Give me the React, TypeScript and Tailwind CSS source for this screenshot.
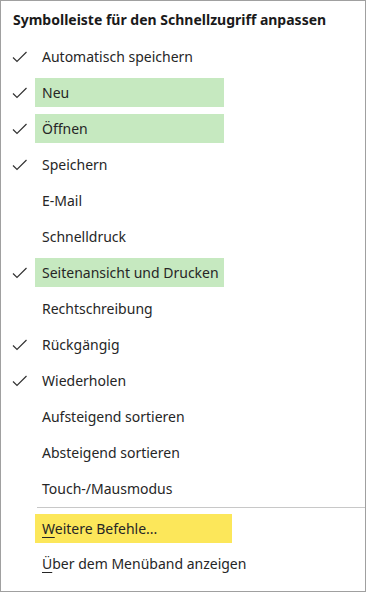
import React from "react";

const items: { label: string; checked: boolean; hl?: boolean }[] = [
  { label: "Automatisch speichern", checked: true },
  { label: "Neu", checked: true, hl: true },
  { label: "Öffnen", checked: true, hl: true },
  { label: "Speichern", checked: true },
  { label: "E-Mail", checked: false },
  { label: "Schnelldruck", checked: false },
  { label: "Seitenansicht und Drucken", checked: true, hl: true },
  { label: "Rechtschreibung", checked: false },
  { label: "Rückgängig", checked: true },
  { label: "Wiederholen", checked: true },
  { label: "Aufsteigend sortieren", checked: false },
  { label: "Absteigend sortieren", checked: false },
  { label: "Touch-/Mausmodus", checked: false },
];

function Check() {
  return (
    <svg width="16" height="12" viewBox="0 0 16 12" fill="none">
      <path d="M1 6.5 L5 10.5 L14.5 1" stroke="#333" strokeWidth="1.2" />
    </svg>
  );
}

export default function App() {
  return (
    <div className="w-[367px] h-[592px] bg-white">
      <div
        className="w-[366px] h-[592px] border border-[#a0a0a0] bg-white text-[#262626]"
        style={{ fontFamily: '"Noto Sans", sans-serif' }}
      >
        <div className="h-[41px] pl-[12px] pt-[8px] text-[14px] font-bold text-[#1a1a1a]">
          Symbolleiste für den Schnellzugriff anpassen
        </div>
        <div className="flex flex-col gap-[7px]">
          {items.map((it) => (
            <div key={it.label} className="flex items-center h-[29px]">
              <div className="w-[34px] flex justify-center pl-[3px]">
                {it.checked && <Check />}
              </div>
              <div
                className={`h-[29px] w-[189px] flex items-center pl-[7px] text-[14px] ${
                  it.hl ? "bg-[#c6e9c0]" : ""
                }`}
              >
                {it.label}
              </div>
            </div>
          ))}
        </div>
        <div className="ml-[36px] mt-[4px] h-px bg-[#c8c8c8]" />
        <div className="mt-[6px] flex flex-col gap-[6px]">
          <div className="flex items-center h-[29px]">
            <div className="w-[34px]" />
            <div className="h-[29px] w-[197px] flex items-center pl-[7px] text-[14px] bg-[#fce75a]">
              <span>
                <span className="underline underline-offset-[3px]">W</span>eitere Befehle...
              </span>
            </div>
          </div>
          <div className="flex items-center h-[29px]">
            <div className="w-[34px]" />
            <div className="h-[29px] flex items-center pl-[7px] text-[14px]">
              <span>
                <span className="underline underline-offset-[3px]">Ü</span>ber dem Menüband anzeigen
              </span>
            </div>
          </div>
        </div>
      </div>
    </div>
  );
}
